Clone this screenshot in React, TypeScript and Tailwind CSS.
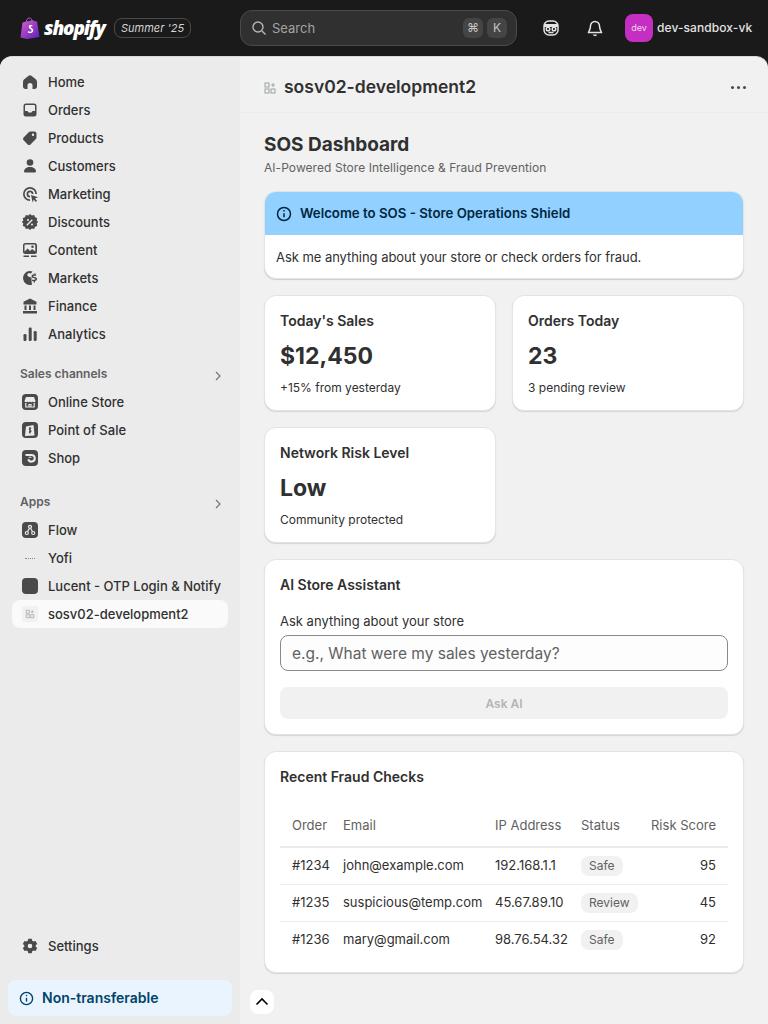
import React from 'react';

const font = { fontFamily: 'Inter, "Noto Sans", sans-serif' };

const icones: Record<string, React.ReactNode> = {
  home: <path d="M10 3.200c-.5 0-1 .2-1.400.5L4.300 7.300C3.500 8 3 9 3 10v4.500C3 16 4 17 5.500 17H7.500v-3.500a2.500 2.500 0 0 1 5 0V17h2c1.500 0 2.500-1 2.500-2.500V10c0-1-.5-2-1.300-2.700l-4.300-3.600c-.4-.3-.9-.5-1.400-.5z" />,
  orders: <path fillRule="evenodd" d="M6 3.500h8A2.500 2.500 0 0 1 16.500 6v8a2.500 2.500 0 0 1-2.500 2.500H6A2.500 2.500 0 0 1 3.500 14V6A2.500 2.500 0 0 1 6 3.500zM5 11h2.500l1 1.500h3l1-1.500H15V6a1 1 0 0 0-1-1H6a1 1 0 0 0-1 1v5z" />,
  products: <path fillRule="evenodd" d="M10.500 3.500h4A2 2 0 0 1 16.500 5.500v4c0 .6-.2 1.100-.6 1.500l-5.400 5.400a2 2 0 0 1-2.800 0L3.600 12.300a2 2 0 0 1 0-2.800L9 4.100c.4-.4.900-.6 1.500-.6zM13 8a1.200 1.200 0 1 0 0-2.400A1.200 1.200 0 0 0 13 8z" />,
  customers: <><circle cx="10" cy="6.500" r="3.300" /><path d="M10 11c-3.500 0-6 2-6 4.300 0 .9.700 1.200 1.500 1.200h9c.8 0 1.500-.3 1.500-1.200C16 13 13.500 11 10 11z" /></>,
  marketing: <path fillRule="evenodd" d="M10 3a7 7 0 0 1 7 7h-1.700A5.300 5.300 0 1 0 10 15.300V17a7 7 0 0 1 0-14zm0 3.500A3.500 3.500 0 0 1 13.500 10h-1.700A1.800 1.800 0 1 0 10 11.800v1.700a3.500 3.500 0 0 1 0-7zm1 4.500l7 2.300-3 1.200 2 2.300-1.200 1.100-2-2.300-1.200 2.900L11 11z" />,
  discounts: <path fillRule="evenodd" d="M10 2l1.800 1.500 2.400-.5.800 2.200 2.200.8-.5 2.400L18.200 10l-1.500 1.600.5 2.400-2.200.8-.8 2.200-2.400-.5L10 18l-1.800-1.500-2.400.5-.8-2.200-2.200-.8.500-2.400L1.800 10l1.500-1.600L2.800 6l2.200-.8.800-2.200 2.400.5L10 2zM8 9a1 1 0 1 0 0-2 1 1 0 0 0 0 2zm4 4.500a1 1 0 1 0 0-2 1 1 0 0 0 0 2zm-4.700.2l5.500-5.500-1-1-5.500 5.500 1 1z" />,
  content: <path fillRule="evenodd" d="M5.500 3h9A2.500 2.500 0 0 1 17 5.500v6a2.500 2.500 0 0 1-2.500 2.500h-9A2.500 2.500 0 0 1 3 11.500v-6A2.500 2.500 0 0 1 5.500 3zm-.9 8.500l3-3 2.400 2.400 2.100-1.900 3.200 2.400V5.500a1 1 0 0 0-1-1h-9a1 1 0 0 0-.8 1v6zM12.500 8a1.300 1.300 0 1 0 0-2.600 1.300 1.300 0 0 0 0 2.600zM3.500 15.500h5.500V17H3.500v-1.500zm7.500 0h5.500V17H11v-1.500z" />,
  markets: <path fillRule="evenodd" d="M10 3a7 7 0 0 1 2.500.5L11 5.500 8.500 5 7 7l2 2 2.500.5V13l.5 3.700A7 7 0 1 1 10 3zm5.300 3.300h-1.500c-1.400 0-2.300.8-2.300 1.900 0 2.500 3.900 1.500 3.900 2.800 0 .4-.4.700-1 .7h-2.400V13h1.500v1.500h1.500V13c1.300-.2 2-1 2-2 0-2.600-3.900-1.600-3.900-2.800 0-.3.300-.5.800-.5h2.200V6.300h-.8V5h-1.500l1.500 1.300z" />,
  finance: <path fillRule="evenodd" d="M10 2.500l6.500 3.300V8.500h-13V5.800L10 2.500zM4.500 9.500h2V14h-2V9.500zm4.500 0h2V14H9V9.500zm4.500 0h2V14h-2V9.500zM3 15h14v2.500H3V15z" />,
  analytics: <><rect x="3.500" y="10" width="3" height="7" rx="1.200" /><rect x="8.700" y="3.500" width="3" height="13.500" rx="1.200" /><rect x="13.700" y="7" width="3" height="10" rx="1.200" /></>,
  settings: <path fillRule="evenodd" d="M8.300 2.800h3.400l.5 2 1.300.7 2-.6 1.700 3-1.500 1.400v1.400l1.500 1.400-1.700 3-2-.6-1.300.7-.5 2H8.300l-.5-2-1.300-.7-2 .6-1.700-3L4.300 10.700V9.300L2.800 7.900l1.700-3 2 .6 1.300-.7.500-2zM10 12.300a2.300 2.300 0 1 0 0-4.600 2.300 2.300 0 0 0 0 4.600z" />,
};

const principais = [
  ['home', 'Home'],
  ['orders', 'Orders'],
  ['products', 'Products'],
  ['customers', 'Customers'],
  ['marketing', 'Marketing'],
  ['discounts', 'Discounts'],
  ['content', 'Content'],
  ['markets', 'Markets'],
  ['finance', 'Finance'],
  ['analytics', 'Analytics'],
];

function Icone({ nome }: { nome: string }) {
  return (
    <svg viewBox="0 0 20 20" className="w-5 h-5 shrink-0" fill="#4a4a4a">
      {icones[nome]}
    </svg>
  );
}

function Bloco({ children }: { children: React.ReactNode }) {
  return (
    <span className="w-4 h-4 mx-0.5 shrink-0 rounded-[4px] bg-[#4a4a4a] flex items-center justify-center">
      <svg viewBox="0 0 16 16" className="w-4 h-4" fill="none" stroke="#ebebeb" strokeWidth="1.200">
        {children}
      </svg>
    </span>
  );
}

function GradeApp({ cor, className }: { cor: string; className: string }) {
  return (
    <svg viewBox="0 0 16 16" className={className} fill="none" stroke={cor} strokeWidth="1.100">
      <rect x="3" y="3" width="4" height="4" />
      <rect x="3" y="9" width="4" height="4" />
      <rect x="9" y="9" width="4" height="4" />
      <path d="M11 3v4M9 5h4" />
    </svg>
  );
}

function Item({ icone, rotulo, ativo }: { icone: React.ReactNode; rotulo: string; ativo?: boolean }) {
  return (
    <div className={`h-7 mx-3 px-2 flex items-center gap-2 rounded-lg ${ativo ? 'bg-[#fafafa]' : ''}`}>
      {icone}
      <span className="text-[13px] font-medium leading-none text-[#303030] whitespace-nowrap">{rotulo}</span>
    </div>
  );
}

function Secao({ titulo }: { titulo: string }) {
  return (
    <div className="h-7 pl-5 pr-[17px] flex items-center justify-between">
      <span className="text-xs font-semibold text-[#616161]">{titulo}</span>
      <svg viewBox="0 0 10 10" className="w-2.5 h-2.5 mt-1" fill="none" stroke="#7a7a7a" strokeWidth="1.300">
        <path d="M3 1l4 4-4 4" />
      </svg>
    </div>
  );
}

function Info({ cor, className }: { cor: string; className: string }) {
  return (
    <svg viewBox="0 0 16 16" className={className} fill="none" stroke={cor} strokeWidth="1.500">
      <circle cx="8" cy="8" r="6.500" />
      <path d="M8 7.300v4" />
      <circle cx="8" cy="4.800" r="0.500" fill={cor} strokeWidth="0.800" />
    </svg>
  );
}

function Cartao({ titulo, valor, nota }: { titulo: string; valor: string; nota: string }) {
  return (
    <div className="h-[116px] bg-white rounded-xl border border-[#e3e3e3] shadow-[0_1px_1px_rgba(0,0,0,0.12)] px-[15px] pt-[15px]">
      <h3 className="text-sm leading-5 font-semibold text-[#303030]">{titulo}</h3>
      <p className="mt-[9px] text-[23px] leading-8 font-bold text-[#303030]">{valor}</p>
      <p className="mt-2 text-xs leading-4 text-[#303030]">{nota}</p>
    </div>
  );
}

const pedidos = [
  { id: '#1234', email: 'john@example.com', ip: '192.168.1.1', status: 'Safe', risco: 95 },
  { id: '#1235', email: 'suspicious@temp.com', ip: '45.67.89.10', status: 'Review', risco: 45 },
  { id: '#1236', email: 'mary@gmail.com', ip: '98.76.54.32', status: 'Safe', risco: 92 },
];

export default function App() {
  return (
    <div style={font} className="relative w-[768px] h-[1024px] overflow-hidden bg-[#1a1a1a] flex flex-col">
      {/* Barra superior */}
      <header className="h-14 shrink-0 flex items-center relative">
        <div className="w-60 shrink-0 pl-5 flex items-center">
          <svg viewBox="0 0 20 22" className="w-5 h-[22px] shrink-0">
            <defs>
              <linearGradient id="sacola" x1="0" y1="0" x2="1" y2="1">
                <stop offset="0" stopColor="#d65bd0" />
                <stop offset="1" stopColor="#5b21b6" />
              </linearGradient>
            </defs>
            <path d="M2.500 5.500L13 3l1 1 3 .5L19.500 20 7 22 .5 20.500z" fill="url(#sacola)" />
            <path d="M6 6c0-3 1.500-5 3.500-5S12 3 12 5" fill="none" stroke="#b45cc8" strokeWidth="1" />
            <path d="M12.500 8.500c-1-.6-3.500-.8-3.700 1.200-.2 2 3 2.300 2.800 4-.1 1.200-1.800 1.300-3.300.3l-.4 1.500c2 1.200 5 .6 5.400-1.700.3-2.300-3-2.800-2.800-4 .1-.6 1-.7 1.700-.4z" fill="#fff" />
          </svg>
          <span
            style={{ fontFamily: '"Open Sans", sans-serif' }}
            className="ml-1 w-[62px] text-[19px] leading-none font-extrabold italic tracking-[-1.15px] text-white"
          >
            shopify
          </span>
          <span className="ml-2 h-5 px-1.5 flex items-center rounded-lg border border-[#4a4a4a] text-[11px] italic text-[#d4d4d4] whitespace-nowrap">
            Summer '25
          </span>
        </div>

        <div className="w-[277px] h-9 shrink-0 pl-2.5 pr-[9px] flex items-center rounded-xl bg-[#303030] border border-[#4a4a4a]">
          <svg viewBox="0 0 16 16" className="w-4 h-4" fill="none" stroke="#b5b5b5" strokeWidth="1.400">
            <circle cx="7" cy="7" r="5" />
            <path d="M11 11l3.500 3.500" />
          </svg>
          <span className="ml-[5px] pt-px text-[13px] text-[#a3a3a3]">Search</span>
          <span className="ml-auto w-5 h-5 rounded-md bg-[#454545] flex items-center justify-center text-xs text-[#c4c4c4]">⌘</span>
          <span className="ml-1 w-5 h-5 rounded-md bg-[#454545] flex items-center justify-center text-xs text-[#c4c4c4]">K</span>
        </div>

        <svg viewBox="0 0 20 20" className="ml-6 w-5 h-5 shrink-0" fill="none" stroke="#e3e3e3" strokeWidth="1.500">
          <rect x="3" y="3" width="14" height="14" rx="5" />
          <path d="M3 7.500h14" strokeWidth="3" />
          <circle cx="7" cy="11" r="1.800" />
          <circle cx="13" cy="11" r="1.800" />
          <path d="M7.500 14.500h5" />
        </svg>
        <svg viewBox="0 0 20 20" className="ml-6 w-5 h-5 shrink-0" fill="none" stroke="#e3e3e3" strokeWidth="1.500">
          <path d="M10 3.500a4.500 4.500 0 0 0-4.500 4.500c0 4-2 5.500-2 6.500h13c0-1-2-2.500-2-6.500A4.500 4.500 0 0 0 10 3.500z" />
          <path d="M8.500 16.500a1.700 1.700 0 0 0 3 0" />
        </svg>

        <div className="ml-5 w-7 h-7 shrink-0 rounded-lg bg-[#c42fc2] flex items-center justify-center text-[9px] text-[#f5d5f3]">dev</div>
        <span className="ml-1 text-xs font-medium tracking-[0.08px] text-[#e3e3e3] whitespace-nowrap">dev-sandbox-vk</span>
      </header>

      <div className="flex-1 min-h-0 flex rounded-t-xl overflow-hidden bg-[#f1f1f1] border-t border-[#d8d8d8]">
        {/* Barra lateral */}
        <aside className="w-60 shrink-0 bg-[#ebebeb] flex flex-col pt-[11px] pb-2">
          {principais.map(([nome, rotulo]) => (
            <Item key={nome} icone={<Icone nome={nome} />} rotulo={rotulo} />
          ))}

          <div className="mt-3">
            <Secao titulo="Sales channels" />
            <Item
              rotulo="Online Store"
              icone={
                <Bloco>
                  <path d="M4 3h8l1.500 4a1.500 1.500 0 0 1-2.800.5 1.600 1.600 0 0 1-2.700 0 1.600 1.600 0 0 1-2.700 0A1.500 1.500 0 0 1 2.500 7z" fill="#ebebeb" stroke="none" />
                  <path d="M3.800 9v4h8.400V9M7 13v-2.500h2V13" />
                </Bloco>
              }
            />
            <Item
              rotulo="Point of Sale"
              icone={
                <Bloco>
                  <path d="M4 4.500L11.500 3l1 10.500-9.500.5z" fill="#ebebeb" stroke="none" />
                  <path d="M9.300 6.300c-1.800-.7-2.600 1.100-1.200 1.800 1.500.7.800 2.500-1.200 1.800M8 5v6.500" stroke="#4a4a4a" />
                </Bloco>
              }
            />
            <Item
              rotulo="Shop"
              icone={
                <Bloco>
                  <path d="M3.500 5h6a3.300 3.300 0 1 1-3.200 4.200" strokeWidth="2" />
                  <path d="M6.500 8a1.700 1.700 0 0 1 3 0" strokeWidth="1" />
                </Bloco>
              }
            />
          </div>

          <div className="mt-4">
            <Secao titulo="Apps" />
            <Item
              rotulo="Flow"
              icone={
                <Bloco>
                  <circle cx="8" cy="4.800" r="1.500" />
                  <circle cx="4.800" cy="11" r="1.500" />
                  <circle cx="11.200" cy="11" r="1.500" />
                  <path d="M7.500 6.300l-2 3.300M8.500 6.300l2 3.300" />
                </Bloco>
              }
            />
            <Item
              rotulo="Yofi"
              icone={
                <span className="w-5 h-5 shrink-0 flex items-center justify-center">
                  <span className="w-2.5 border-t border-dotted border-[#8a8a8a]" />
                </span>
              }
            />
            <Item rotulo="Lucent - OTP Login & Notify" icone={<span className="w-4 h-4 mx-0.5 shrink-0 rounded-[4px] bg-[#4a4a4a]" />} />
            <Item
              ativo
              rotulo="sosv02-development2"
              icone={
                <span className="w-4 h-4 mx-0.5 shrink-0 rounded-[3px] bg-[#f1f1f1] flex items-center justify-center">
                  <GradeApp cor="#b0b0b0" className="w-3 h-3" />
                </span>
              }
            />
          </div>

          <div className="mt-auto">
            <Item icone={<Icone nome="settings" />} rotulo="Settings" />
            <div className="mt-5 mx-2 h-9 pl-[11px] pr-3 flex items-center gap-2 rounded-lg bg-[#eaf4ff]">
              <Info cor="#00436a" className="w-[15px] h-[15px] shrink-0" />
              <span className="text-sm font-semibold text-[#00436a]">Non-transferable</span>
            </div>
          </div>
        </aside>

        {/* Conteúdo */}
        <main className="flex-1 min-w-0">
          <div className="h-14 pt-1.5 pl-6 pr-[22px] flex items-center border-b border-[#ebebeb]">
            <span className="w-5 h-5 -ml-1 mr-1 shrink-0 rounded bg-[#f1f2f4] flex items-center justify-center">
              <GradeApp cor="#a8a8a8" className="w-4 h-4" />
            </span>
            <h1 className="text-[17.5px] font-semibold text-[#303030]">sosv02-development2</h1>
            <div className="ml-auto flex gap-[3px]">
              <span className="w-[3px] h-[3px] rounded-full bg-[#4a4a4a]" />
              <span className="w-[3px] h-[3px] rounded-full bg-[#4a4a4a]" />
              <span className="w-[3px] h-[3px] rounded-full bg-[#4a4a4a]" />
            </div>
          </div>

          <div className="px-6 pt-[18px]">
            <h2 className="text-[19px] leading-7 font-bold text-[#303030]">SOS Dashboard</h2>
            <p className="mt-px text-xs leading-4 tracking-[0.06px] text-[#616161]">AI-Powered Store Intelligence &amp; Fraud Prevention</p>

            <section className="mt-[15px] bg-white rounded-xl overflow-hidden border border-[#e3e3e3] shadow-[0_1px_1px_rgba(0,0,0,0.15)]">
              <div className="h-[43px] px-[11px] flex items-center gap-2 bg-[#91d0ff]">
                <Info cor="#00273f" className="w-4 h-4 shrink-0" />
                <span className="text-[13.25px] font-semibold text-[#00273f]">Welcome to SOS - Store Operations Shield</span>
              </div>
              <p className="h-[43px] pt-[3px] px-[11px] flex items-center text-[13px] tracking-[-0.05px] text-[#303030]">Ask me anything about your store or check orders for fraud.</p>
            </section>

            <div className="mt-4 grid grid-cols-2 gap-x-4 gap-y-4">
              <Cartao titulo="Today's Sales" valor="$12,450" nota="+15% from yesterday" />
              <Cartao titulo="Orders Today" valor="23" nota="3 pending review" />
              <Cartao titulo="Network Risk Level" valor="Low" nota="Community protected" />
            </div>

            <section className="mt-4 h-[176px] bg-white rounded-xl border border-[#e3e3e3] shadow-[0_1px_1px_rgba(0,0,0,0.12)] p-[15px]">
              <h3 className="text-sm leading-5 font-semibold text-[#303030]">AI Store Assistant</h3>
              <label className="block mt-4 text-[13px] leading-5 text-[#303030]">Ask anything about your store</label>
              <div className="mt-1 h-9 pt-px px-[11px] flex items-center rounded-lg border border-[#8a8a8a] bg-[#fdfdfd] text-[15.5px] text-[#616161]">
                e.g., What were my sales yesterday?
              </div>
              <button className="mt-4 w-full h-8 pt-px rounded-lg bg-[#f1f1f1] text-xs font-semibold text-[#b5b5b5]">Ask AI</button>
            </section>

            <section className="mt-4 h-[222px] bg-white rounded-xl border border-[#e3e3e3] shadow-[0_1px_1px_rgba(0,0,0,0.12)] p-[15px]">
              <h3 className="text-sm leading-5 font-semibold text-[#303030]">Recent Fraud Checks</h3>
              <table className="mt-[17px] w-full table-fixed border-collapse text-[13px] text-[#303030]">
                <thead>
                  <tr className="h-[43px] border-b-2 border-[#ebebeb] text-left text-[#616161]">
                    <th className="w-[51px] pl-3 pt-0.5 font-normal">Order</th>
                    <th className="w-[152px] pl-3 pt-0.5 font-normal">Email</th>
                    <th className="w-[86px] pl-3 pt-0.5 font-normal">IP Address</th>
                    <th className="w-[69px] pl-3 pt-0.5 font-normal">Status</th>
                    <th className="pr-3 pt-0.5 font-normal text-right whitespace-nowrap">Risk Score</th>
                  </tr>
                </thead>
                <tbody>
                  {pedidos.map((p, i) => (
                    <tr key={p.id} className={`h-[37px] ${i < 2 ? 'border-b border-[#ebebeb]' : ''}`}>
                      <td className="pl-3 whitespace-nowrap">{p.id}</td>
                      <td className="pl-3 whitespace-nowrap">{p.email}</td>
                      <td className="pl-3 whitespace-nowrap">{p.ip}</td>
                      <td className="pl-3">
                        <span className="inline-flex items-center h-5 px-2 rounded-lg bg-[#f1f1f1] text-xs text-[#616161]">{p.status}</span>
                      </td>
                      <td className="pr-3 text-right">{p.risco}</td>
                    </tr>
                  ))}
                </tbody>
              </table>
            </section>
          </div>
        </main>
      </div>

      {/* Botão de voltar ao topo */}
      <button className="absolute left-[250px] top-[990px] w-6 h-6 rounded-lg bg-white flex items-center justify-center">
        <svg viewBox="0 0 14 14" className="w-3.5 h-3.5" fill="none" stroke="#000" strokeWidth="1.600">
          <path d="M1.500 9.500L7 4l5.500 5.500" />
        </svg>
      </button>
    </div>
  );
}
